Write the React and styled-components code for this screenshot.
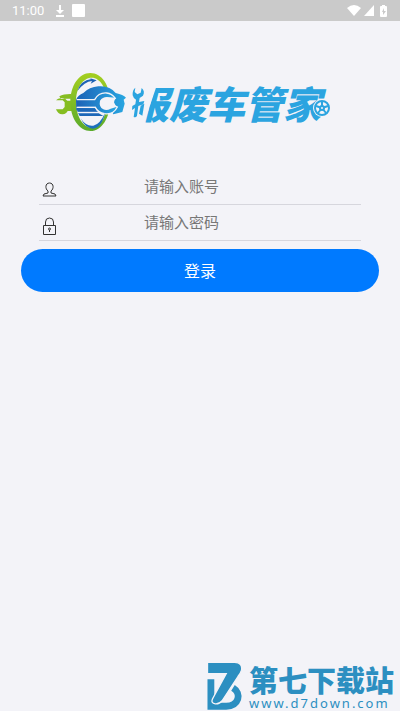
import React from "react";
import styled, { createGlobalStyle } from "styled-components";

const GlobalStyle = createGlobalStyle`
  *, *::before, *::after { box-sizing: border-box; }
  body {
    margin: 0;
    background: #f3f3f8;
    font-family: "Noto Sans CJK SC", "Noto Sans", sans-serif;
  }
`;

const Page = styled.div`
  min-height: 100vh;
  display: flex;
  flex-direction: column;
  background: #f3f3f8;
`;

const StatusBar = styled.header`
  display: flex;
  align-items: center;
  height: 21px;
  padding: 0 12px;
  background: #cacaca;
  color: #fff;
  font: 13px/20px Roboto, sans-serif;
`;

const StatusIcons = styled.div`
  display: flex;
  align-items: center;
  margin-left: ${(p) => (p.$end ? "auto" : "12px")};
  gap: ${(p) => (p.$end ? "2px" : "8px")};
  svg { display: block; fill: #fff; }
`;

const Brand = styled.h1`
  display: flex;
  align-items: center;
  justify-content: center;
  margin: 52px 0 0;
  padding-right: 24px;
  color: #2ba4e0;
  font-size: 38px;
  line-height: 59px;
  font-weight: 900;
  font-style: italic;
  svg { display: block; flex: none; }
`;

const BrandName = styled.span`
  position: relative;
  display: flex;
  margin-left: 2px;
`;

const FirstGlyph = styled.span`
  clip-path: polygon(30px 0, 60px 0, 60px 59px, 10px 59px);
`;

const WrenchMark = styled.svg`
  position: absolute;
  left: 1px;
  top: 14px;
`;

const WheelMark = styled.svg`
  position: absolute;
  right: -10px;
  bottom: 15px;
`;

const Form = styled.form`
  display: flex;
  flex-direction: column;
  margin-top: 37px;
  padding: 0 21px;
`;

const Field = styled.div`
  display: flex;
  align-items: center;
  height: 36px;
  margin: 0 18px;
  border-bottom: 1px solid #d6d6dd;
`;

const FieldLabel = styled.label`
  flex: 0 0 105px;
  padding: 7px 0 0 3px;
  svg { display: block; fill: none; stroke: #333; }
`;

const FieldInput = styled.input`
  flex: 1;
  min-width: 0;
  height: 32px;
  padding: 0 0 2px;
  border: 0;
  outline: 0;
  background: transparent;
  color: #333;
  font: 15px/24px "Noto Sans CJK SC", sans-serif;
  &::placeholder { color: #777; opacity: 1; }
`;

const LoginButton = styled.button`
  height: 43px;
  margin-top: 8px;
  padding: 0 0 2px;
  border: 0;
  border-radius: 22px;
  background: #007aff;
  color: #fff;
  font: 16px/24px "Noto Sans CJK SC", sans-serif;
`;

const Footer = styled.footer`
  display: flex;
  align-items: flex-end;
  justify-content: flex-end;
  gap: 6px;
  margin-top: auto;
  padding-right: 6px;
  color: #2c8fc1;
  svg { display: block; }
`;

const SiteText = styled.div`
  display: flex;
  flex-direction: column;
`;

const SiteName = styled.strong`
  font-size: 29px;
  line-height: 32px;
  font-weight: 900;
`;

const SiteLink = styled.a`
  color: inherit;
  text-decoration: none;
  font: 13px/16px "Noto Sans", sans-serif;
  letter-spacing: 2px;
`;

function CarLogo() {
  return (
    <svg width="74" height="59" viewBox="18 24 216 177" aria-hidden="true">
      <defs>
        <linearGradient id="ring" x1="0" y1="0" x2="0" y2="1">
          <stop offset="0" stopColor="#a5cf20" />
          <stop offset="1" stopColor="#5aaa2c" />
        </linearGradient>
        <linearGradient id="body" x1="0" y1="0" x2="1" y2="0">
          <stop offset="0" stopColor="#1c62b6" />
          <stop offset="1" stopColor="#28a7e2" />
        </linearGradient>
      </defs>
      <path d="M28 94q14-8 38-7v14H32zM18 106h20l6 6v14l-6 7H18q6 16 20 15 11-1 15-10h16v-31H52q-6-9-18-8-11 1-16 7z" fill="#86bd22" />
      <path fillRule="evenodd" fill="url(#ring)" d="M121 24c35 0 59 38 59 86s-25 88-58 88c-35 0-61-39-61-87s25-87 60-87zm4 14c-27 0-47 32-47 72 0 43 21 78 48 78 25 0 44-34 44-77 0-41-19-73-45-73z" />
      <path d="M82 78q10-32 42-36l-8-4 24 8-18 10 4-8q-22 2-44 30z" fill="#1d62b4" />
      <path d="M78 104q6-14 22-20 18-18 45-20 34-3 52 20 23 5 31 14l-7 6 3 12-7 25-27 7-6-12H79z" fill="url(#body)" />
      <path d="M80 104h54q12-22 36-20 16 2 26 16l-8 6 2 14 12 6q-12 24-38 20-20-3-28-19H80" fill="url(#body)" stroke="#f3f3f8" strokeWidth="4" />
      <path d="M196 98l-16-1q-20-5-30 10-4 18 10 26 10 5 22-2l17-5-7-14z" fill="#f3f3f8" />
      <path d="M80 131h54l10 10H83zM84 145h62l14 8H89z" fill="#1d67b8" />
      <path d="M82 127h56M84 142h58" stroke="#f3f3f8" strokeWidth="3" />
      <path d="M92 160q16 25 38 22 20-4 35-38-10 45-37 47-22-1-36-31z" fill="#1d70bd" />
    </svg>
  );
}

function Wheel() {
  return (
    <WheelMark width="18" height="18" viewBox="0 0 18 18" aria-hidden="true">
      <circle cx="9" cy="9" r="9" fill="#f3f3f8" />
      <circle cx="9" cy="9" r="7" fill="none" stroke="#2ba4e0" strokeWidth="2" />
      <path d="M9 9V3M9 9l6-2M9 9l4 5M9 9l-4 5M9 9L3 7" stroke="#2ba4e0" strokeWidth="2" />
      <circle cx="9" cy="9" r="3" fill="#2ba4e0" />
      <circle cx="9" cy="9" r="1" fill="#f3f3f8" />
    </WheelMark>
  );
}

export default function App() {
  return (
    <Page>
      <GlobalStyle />
      <StatusBar>
        <span>11:00</span>
        <StatusIcons>
          <svg width="8" height="12" viewBox="0 0 8 12"><path d="M3 0h2v5h3L4 9 0 5h3zM0 10h8v2H0z" /></svg>
          <svg width="13" height="13"><rect width="13" height="13" rx="1" /></svg>
        </StatusIcons>
        <StatusIcons $end>
          <svg width="14" height="11" viewBox="0 0 14 11"><path d="M0 3Q7-3 14 3L7 11z" /></svg>
          <svg width="12" height="11" viewBox="0 0 12 11"><path d="M1 11L11 0v11z" /></svg>
          <svg width="11" height="12" viewBox="0 0 11 12"><path fillRule="evenodd" d="M4 1h1V0h3v1h1q1 0 1 1v9q0 1-1 1H4q-1 0-1-1V2q0-1 1-1zm3 2L5 7h1v3l3-4H7z" /></svg>
        </StatusIcons>
      </StatusBar>

      <main>
        <Brand>
          <CarLogo />
          <BrandName>
            <FirstGlyph>报</FirstGlyph>废车管家
            <WrenchMark width="14" height="31" viewBox="0 0 42 93" aria-hidden="true">
              <path fill="#2ba4e0" d="M10 2l-2 13 8 7 10-5 3-14q11 10 4 23l-10 7-2 12 16-3-3 10-15 5-4 29q-3 7-10 4l4-27-9 6 1-12 9-5 2-14q-8-4-10-13Q1 8 10 2zM26 56l11-6-6 36-10-6z" />
            </WrenchMark>
            <Wheel />
          </BrandName>
        </Brand>

        <Form onSubmit={(e) => e.preventDefault()}>
          <Field>
            <FieldLabel htmlFor="account" aria-label="账号">
              <svg width="15" height="16" viewBox="0 0 15 16"><path d="M6 9C3 7 3 1 7.500 1S12 7 9 9v2l4 1 1 2H1l1-2 4-1z" /></svg>
            </FieldLabel>
            <FieldInput id="account" type="text" placeholder="请输入账号" />
          </Field>
          <Field>
            <FieldLabel htmlFor="password" aria-label="密码">
              <svg width="15" height="19" viewBox="0 0 15 19">
                <path d="M1.500 8.500h12v9h-12zM3.500 8V5a4 4 0 0 1 8 0v3M7.500 13v2" />
                <circle cx="7.500" cy="12" r="1" />
              </svg>
            </FieldLabel>
            <FieldInput id="password" type="password" placeholder="请输入密码" />
          </Field>
          <LoginButton type="submit">登录</LoginButton>
        </Form>
      </main>

      <Footer>
        <svg width="37" height="49" viewBox="14 12 108 144" aria-hidden="true">
          <path fill="none" stroke="#2c8fc1" strokeWidth="20" d="M28 63v79h45c38 0 46-38 20-54" />
          <path fill="#2c8fc1" d="M18 13h80q24 1 20 23-3 10-10 18L61 126q-8 10-20 9-14-2-8-15l40-74H18z" stroke="#f3f3f8" strokeWidth="4" />
        </svg>
        <SiteText>
          <SiteName>第七下载站</SiteName>
          <SiteLink href="#home">www.d7down.com</SiteLink>
        </SiteText>
      </Footer>
    </Page>
  );
}
